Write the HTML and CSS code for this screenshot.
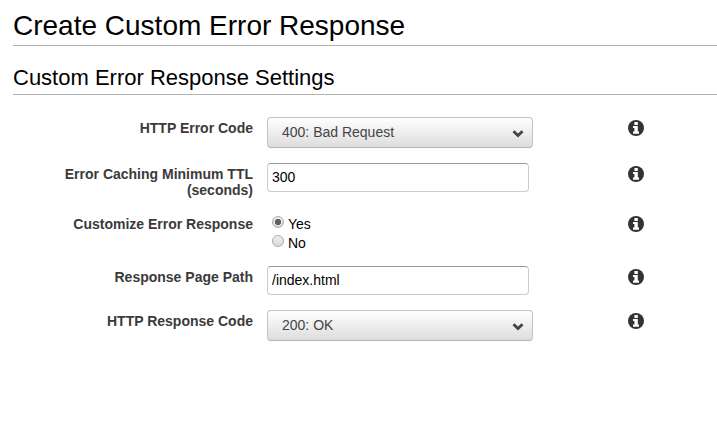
FILE: index.html
```html
<!DOCTYPE html>
<html lang="en">
<head>
<meta charset="utf-8">
<title>Create Custom Error Response</title>
<link rel="stylesheet" href="styles.css">
</head>
<body>
<svg width="0" height="0" class="defs" aria-hidden="true">
  <symbol id="info" viewBox="0 0 16 16">
    <circle cx="8" cy="8" r="8" fill="#333"/>
    <path fill="#fff" d="M6.4 1.9h3.4v3H6.4zM5 6h4.8v5.5H11v2.2H5v-2.2h1.4V8.1H5z"/>
  </symbol>
  <symbol id="chevron" viewBox="0 0 12 8">
    <path fill="none" stroke="#444" stroke-width="2.8" d="M1.5 1.3L6 5.6l4.5-4.3"/>
  </symbol>
</svg>
<main class="page">
  <h1 class="title">Create Custom Error Response</h1>
  <h2 class="subtitle">Custom Error Response Settings</h2>
  <form class="form">
    <div class="row">
      <span class="label">HTTP Error Code</span>
      <div class="select"><span>400: Bad Request</span><svg class="chevron"><use href="#chevron"/></svg></div>
      <svg class="info"><use href="#info"/></svg>
    </div>
    <div class="row">
      <label class="label" for="ttl">Error Caching Minimum TTL (seconds)</label>
      <input class="input" id="ttl" type="text" value="300">
      <svg class="info"><use href="#info"/></svg>
    </div>
    <div class="row">
      <span class="label">Customize Error Response</span>
      <div class="radios">
        <label class="option"><input class="radio" type="radio" name="customize" checked>Yes</label>
        <label class="option"><input class="radio" type="radio" name="customize">No</label>
      </div>
      <svg class="info"><use href="#info"/></svg>
    </div>
    <div class="row">
      <label class="label" for="path">Response Page Path</label>
      <input class="input" id="path" type="text" value="/index.html">
      <svg class="info"><use href="#info"/></svg>
    </div>
    <div class="row">
      <span class="label">HTTP Response Code</span>
      <div class="select"><span>200: OK</span><svg class="chevron"><use href="#chevron"/></svg></div>
      <svg class="info"><use href="#info"/></svg>
    </div>
  </form>
</main>
</body>
</html>
```
FILE: styles.css
```css
* { box-sizing: border-box; }
body {
  margin: 0;
  background: #fff;
  color: #000;
  font: 14px/16px "Liberation Sans", Arial, sans-serif;
}
.defs { display: block; }
.page { padding: 9px 0 0 13px; }
.title, .subtitle {
  margin: 0;
  border-bottom: 1px solid #b3b3b3;
  font-weight: normal;
}
.title { height: 37px; font-size: 28px; line-height: 34px; }
.subtitle { height: 49px; padding-top: 18px; font-size: 22px; line-height: 28px; }
.form { display: flex; flex-direction: column; gap: 15px; padding-top: 22px; }
.row {
  display: grid;
  grid-template-columns: 240px 266px 16px;
  column-gap: 14px;
  align-items: start;
}
.label {
  justify-self: end;
  width: 200px;
  padding-top: 3px;
  color: #3a3a3a;
  font-weight: bold;
  text-align: right;
}
.select {
  display: flex;
  align-items: flex-start;
  justify-content: space-between;
  height: 31px;
  padding: 6px 8px 0 14px;
  border: 1px solid #c3c3c3;
  border-bottom-color: #b3b3b3;
  border-radius: 4px;
  background: linear-gradient(#fff, #ddd);
  color: #444;
}
.chevron { width: 12px; height: 8px; margin-top: 6px; }
.input {
  width: 262px;
  height: 29px;
  padding: 0 4px 2px;
  border: 1px solid #ccc;
  border-top-color: #999;
  border-radius: 4px;
  background: #fff;
  color: #000;
  font: inherit;
}
.info { width: 16px; height: 16px; margin: 3px 0 0 81px; }
.radios { padding-left: 5px; }
.option { display: flex; height: 19px; padding-top: 3px; }
.radio {
  appearance: none;
  width: 12px;
  height: 12px;
  margin: 0 4px 0 0;
  border: 1px solid #aaa;
  border-radius: 50%;
  background: linear-gradient(#eee, #dadada);
}
.radio:checked {
  background: radial-gradient(circle, #606060 0 2.8px, transparent 3.5px), linear-gradient(#eee, #dadada);
}
```
